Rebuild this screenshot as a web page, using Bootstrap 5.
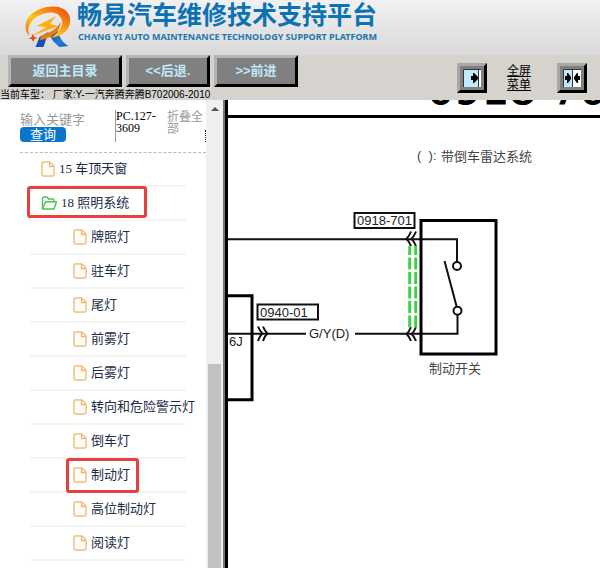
<!DOCTYPE html>
<html lang="zh-CN">
<head>
<meta charset="utf-8">
<meta name="viewport" content="width=device-width, initial-scale=1">
<title>畅易汽车维修技术支持平台</title>
<link rel="stylesheet" href="https://cdn.jsdelivr.net/npm/bootstrap@5.3.0/dist/css/bootstrap.min.css">
<style>
body{font-family:"Liberation Sans","Noto Sans CJK SC",sans-serif;font-size:13px;line-height:16px;color:#000;background:#fff}
.banner{height:55px;background:linear-gradient(#f1f1f1,#d9d9d9);padding-left:24px;gap:7px}
.brand-text{margin-bottom:12px}
.brand-zh{font-size:25px;line-height:30px;font-weight:700;color:#0b72b5}
.brand-en{font-family:"Noto Sans",sans-serif;font-size:9px;line-height:13px;font-weight:700;color:#2277ae;padding-left:1px}
.tools{background:#d6d3ce;height:45px;padding-left:8px;padding-right:13px}
.tool-btn{height:32px;border:3px solid;border-color:#b4b4b4 #000 #000 #b4b4b4;background:#808080;color:#bfe9fb;font-weight:700;font-size:13px;line-height:16px;padding:0}
.w-main{width:114px}.w-nav{width:84px}
.model-line{font-size:10px;line-height:13px;height:13px;margin-left:-8px;padding-top:1px;white-space:nowrap}
.sq-btn{width:30px;height:30px;padding:0;border:3px solid;border-color:#a8a8a8 #000 #000 #a8a8a8;background:#808080}
.sq-btn svg{flex:none}
.menu-label{font-size:12px;line-height:14px;width:24px;color:#000;margin:0 26px 0 20px}
.side{width:206px;overflow:hidden}
.search-area{height:53px;margin-left:20px;border-bottom:1px dashed #bbb;padding-top:10px}
.search-col{width:96px;height:32px;border-right:1px solid #999;padding-top:2px}
.key-input{border:0;padding:0;font-size:13px;line-height:15px;height:15px;width:90px;background:none}
.key-input::placeholder{color:#999;opacity:1}
.go-btn{border:0;border-radius:4px;background:#0b74cc;color:#fff;font-size:13px;line-height:15px;height:15px;width:46px;padding:0}
.code-text{font-family:"Liberation Serif",serif;font-size:12px;line-height:12px;width:51px;height:24px}
.fold-link{font-size:12px;line-height:12px;color:#999;width:36px;margin-top:1px}
.more-dots{border-right:1px dotted #222;height:12px;margin-top:20px}
.tree{margin:0 20px 0 30px}
.tree li{height:34px;border-bottom:2px solid #f4f4f4}
.tree a{height:32px;gap:4px;padding-left:11px;color:#1c2b45;font-family:"Liberation Serif","Noto Sans CJK SC",serif;font-size:13px;white-space:nowrap;position:relative}
.tree .sub a{padding-left:43px}
.tree svg{flex:none}
.marked::after{content:"";position:absolute;border:3px solid #e8403f;border-radius:3px}
.mark-group::after{left:-3px;top:-1px;width:120px;height:32px}
.mark-item::after{left:36px;top:-1px;width:73px;height:35px}
.bar{width:17px;background:#f0f0f0;padding:7px 2px 0}
.thumb{background:#c1c1c1;flex:1;margin-top:253px}
.arrow-up{width:8px;height:4px;margin:0 auto;border:4px solid transparent;border-top:0;border-bottom-color:#505050}
.split{width:5px;background:#000;border-left:2px solid #777}
</style>
<script src="https://cdn.jsdelivr.net/npm/bootstrap@5.3.0/dist/js/bootstrap.bundle.min.js"></script>
</head>
<body class="d-flex flex-column min-vh-100 overflow-hidden">
<svg width="0" height="0" class="position-absolute" aria-hidden="true">
  <symbol id="file" viewBox="0 0 14 16"><path d="M2 1h7l4 4v8.500a1.500 1.500 0 0 1-1.500 1.500h-9A1.500 1.500 0 0 1 1 13.500V2.200A1.200 1.200 0 0 1 2 1z" fill="#fffdf9" stroke="#f1bd80" stroke-width="1.500"/><path d="M8.500 1.500V5.500h4" fill="none" stroke="#efb26b" stroke-width="1.300"/></symbol>
</svg>
<header class="banner d-flex align-items-center">
  <svg width="46" height="44" viewBox="24 0 45 44" aria-hidden="true">
    <defs>
      <linearGradient id="sun" x1="0" y1="1" x2="1" y2="0"><stop offset="0" stop-color="#f1660f"/><stop offset=".4" stop-color="#ffc31a"/><stop offset=".65" stop-color="#f98e10"/><stop offset="1" stop-color="#e5420b"/></linearGradient>
      <linearGradient id="sea" x1="0" y1="0" x2="1" y2="1"><stop offset="0" stop-color="#1a43a8"/><stop offset=".6" stop-color="#1d80d0"/><stop offset="1" stop-color="#1557b0"/></linearGradient>
    </defs>
    <path d="M39 31l9-5-5 15h-8z" fill="#1b4fb0"/>
    <path d="M49 29l8-4c2 6 5 12 11 15l-9 1c-4-3-8-7-10-12z" fill="url(#sea)"/>
    <path d="M29 30C21 23 25 8 40 3c13-5 26-2 29 7 3 11-5 20-19 22 8-5 14-13 11-19-3-7-10-8-19-5C31 12 25 21 29 30z" fill="url(#sun)"/>
    <path d="M56 10L36 20l10 1-15 9 27-10-9-2z" fill="#ffae12"/>
    <path d="M60 16c-4 8-11 10-19 14l-2 4c10-1 21-7 21-18z" fill="#f07a10"/>
    <path d="M32 28l2 3 3 1-3 1-1 3-2-3-3 0 3-2z" fill="#ec4c1a"/>
  </svg>
  <div class="brand-text text-nowrap">
    <div class="brand-zh">畅易汽车维修技术支持平台</div>
    <div class="brand-en">CHANG YI AUTO MAINTENANCE TECHNOLOGY SUPPORT PLATFORM</div>
  </div>
</header>
<nav class="tools d-flex justify-content-between" aria-label="工具栏">
  <div>
    <div class="d-flex gap-1">
      <button type="button" class="tool-btn w-main">返回主目录</button>
      <button type="button" class="tool-btn w-nav">&lt;&lt;后退.</button>
      <button type="button" class="tool-btn w-nav">&gt;&gt;前进</button>
    </div>
    <div class="model-line">当前车型： 厂家:Y-一汽奔腾奔腾B702006-2010</div>
  </div>
  <div class="d-flex align-items-center">
    <button type="button" class="sq-btn d-flex align-items-center justify-content-center" aria-label="全屏">
      <svg width="18" height="18" viewBox="0 0 18 18"><path d="M0 0h18v18H0z" fill="#bfeafa"/><path d="M15 0h3v18h-3z" fill="#fff"/><path d="M15.500 0v18M.5 18V.5H18" stroke="#333" fill="none"/><path d="M8 7h2V4h1l4 4v2l-4 4h-1v-3H8z"/></svg>
    </button>
    <a href="#" class="menu-label">全屏菜单</a>
    <button type="button" class="sq-btn d-flex align-items-center justify-content-center" aria-label="菜单">
      <svg width="18" height="18" viewBox="0 0 18 18"><path d="M0 0h18v18H0z" fill="#fff"/><path d="M0 0h9v18H0z" fill="#bfeafa"/><path d="M9.500 0v18M.5 18V.5H18" stroke="#333" fill="none"/><path d="M2 7h2V4h1l3 4v2l-3 4H4v-3H2zM17 7h-2V4h-1l-3 4v2l3 4h1v-3h2z"/></svg>
    </button>
  </div>
</nav>
<main class="d-flex flex-grow-1">
  <aside class="side flex-shrink-0">
    <form class="search-area d-flex">
      <div class="search-col d-flex flex-column align-items-start flex-shrink-0">
        <input type="text" class="key-input" placeholder="输入关键字" aria-label="输入关键字">
        <button type="button" class="go-btn">查询</button>
      </div>
      <div class="code-text flex-shrink-0">PC.127-3609</div>
      <a href="#" class="fold-link text-decoration-none flex-shrink-0">折叠全部</a>
      <span class="more-dots ms-auto"></span>
    </form>
    <ul class="tree list-unstyled mb-0">
      <li><a href="#" class="d-flex align-items-center text-decoration-none"><svg width="14" height="16"><use href="#file"/></svg>15 车顶天窗</a></li>
      <li><a href="#" class="marked mark-group d-flex align-items-center text-decoration-none"><svg width="16" height="14" viewBox="0 0 16 14"><path d="M1.500 13V2.500q0-1.500 1.500-1.500h3l1.500 2H12q1 0 1 1v1.500" fill="none" stroke="#5cba5c" stroke-width="1.400"/><path d="M1.500 13L4.500 5.700h11L13 13z" fill="#f0fff0" stroke="#5cba5c" stroke-width="1.400" stroke-linejoin="round"/></svg>18 照明系统</a></li>
      <li class="sub"><a href="#" class="d-flex align-items-center text-decoration-none"><svg width="14" height="16"><use href="#file"/></svg>牌照灯</a></li>
      <li class="sub"><a href="#" class="d-flex align-items-center text-decoration-none"><svg width="14" height="16"><use href="#file"/></svg>驻车灯</a></li>
      <li class="sub"><a href="#" class="d-flex align-items-center text-decoration-none"><svg width="14" height="16"><use href="#file"/></svg>尾灯</a></li>
      <li class="sub"><a href="#" class="d-flex align-items-center text-decoration-none"><svg width="14" height="16"><use href="#file"/></svg>前雾灯</a></li>
      <li class="sub"><a href="#" class="d-flex align-items-center text-decoration-none"><svg width="14" height="16"><use href="#file"/></svg>后雾灯</a></li>
      <li class="sub"><a href="#" class="d-flex align-items-center text-decoration-none"><svg width="14" height="16"><use href="#file"/></svg>转向和危险警示灯</a></li>
      <li class="sub"><a href="#" class="d-flex align-items-center text-decoration-none"><svg width="14" height="16"><use href="#file"/></svg>倒车灯</a></li>
      <li class="sub"><a href="#" class="marked mark-item d-flex align-items-center text-decoration-none"><svg width="14" height="16"><use href="#file"/></svg>制动灯</a></li>
      <li class="sub"><a href="#" class="d-flex align-items-center text-decoration-none"><svg width="14" height="16"><use href="#file"/></svg>高位制动灯</a></li>
      <li class="sub"><a href="#" class="d-flex align-items-center text-decoration-none"><svg width="14" height="16"><use href="#file"/></svg>阅读灯</a></li>
    </ul>
  </aside>
  <div class="bar d-flex flex-column flex-shrink-0" aria-hidden="true"><div class="arrow-up"></div><div class="thumb"></div></div>
  <div class="split flex-shrink-0"></div>
  <section class="flex-grow-1 overflow-hidden">
    <svg class="d-block" width="372" height="468" viewBox="228 100 372 468" role="img" aria-label="制动灯电路图" font-family="Liberation Sans, Noto Sans CJK SC, sans-serif" font-size="13" fill="#222">
      <text x="427" y="104" font-family="DejaVu Sans, sans-serif" font-size="43" fill="#000" stroke="#000">0918-701</text>
      <path d="M228 116.500H600" stroke="#000" stroke-width="3"/>
      <text x="417" y="160" fill="#444">(&#160;&#160;):</text>
      <text x="441" y="161" fill="#444">带倒车雷达系统</text>
      <g fill="none" stroke="#111" stroke-width="2">
        <path d="M228 239.300H457V262M228 333.700H306M355 333.700H457.500V315"/>
        <rect x="354.500" y="213" width="60" height="15"/>
        <rect x="257.500" y="304.500" width="60.500" height="15"/>
        <path d="M411 231.500q-2 5-4.500 7.500q2.500 2 4.500 7M416 231.500q-2 5-4.500 7.500q2.500 2 4.500 7M411 327q-2 5-4.500 7q2.500 2 4.500 7M416 327q-2 5-4.500 7q2.500 2 4.500 7M258 326.500q2 5 4.500 7q-2.500 2-4.500 7.500M263 326.500q2 5 4.500 7q-2.500 2-4.500 7.500"/>
        <path d="M444.500 261L456.500 306"/>
        <circle cx="457" cy="266" r="4" fill="#fff"/><circle cx="457.500" cy="310.700" r="4" fill="#fff"/>
        <path d="M228 295.700H252V399.700H228" stroke="#000" stroke-width="3"/>
        <rect x="421" y="220.500" width="75" height="133.500" stroke="#000" stroke-width="3"/>
        <path d="M409.700 246V327.500M415.700 246V327.500" stroke="#3fd046" stroke-width="3" stroke-dasharray="12 2.500" stroke-dashoffset="3"/>
      </g>
      <text x="357" y="225">0918-701</text>
      <text x="260" y="317">0940-01</text>
      <text x="309" y="338">G/Y(D)</text>
      <text x="229" y="346">6J</text>
      <text x="429" y="373" fill="#444">制动开关</text>
    </svg>
  </section>
</main>
</body>
</html>
